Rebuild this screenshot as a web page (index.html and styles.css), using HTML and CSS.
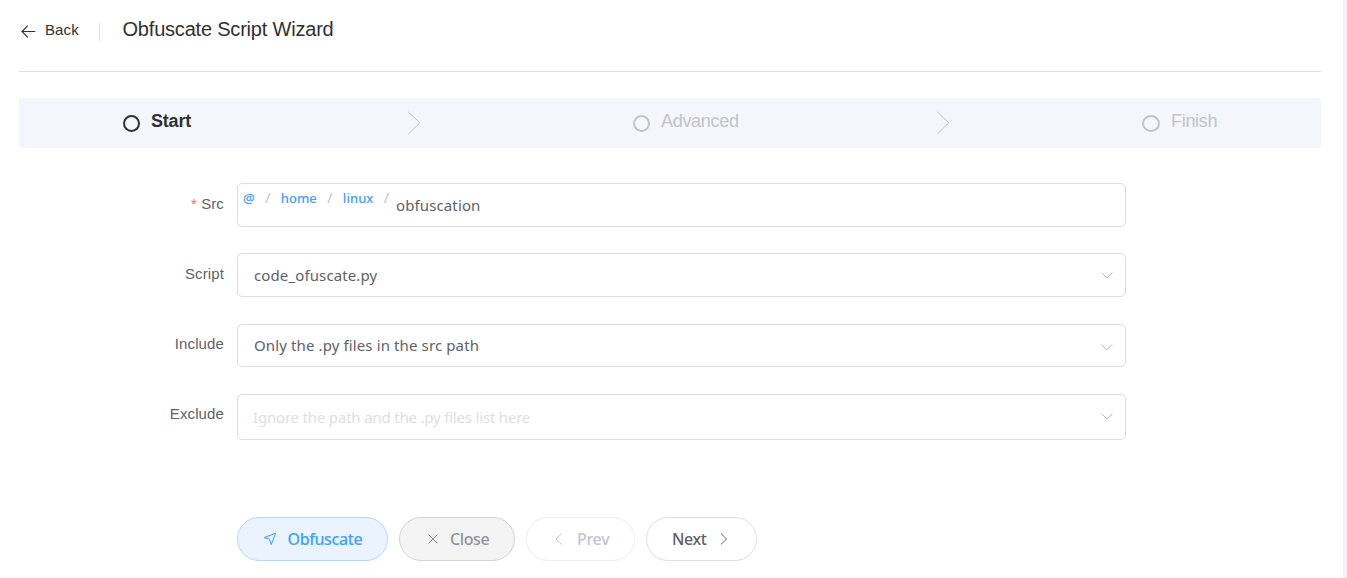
FILE: index.html
```html
<!DOCTYPE html>
<html lang="en">
<head>
<meta charset="utf-8">
<title>Obfuscate Script Wizard</title>
<link rel="stylesheet" href="styles.css">
</head>
<body>
<main class="page">
  <header class="header">
    <a class="back">
      <svg class="back-icon" width="16" height="14" viewBox="0 0 16 14"><path d="M14.3 7.5H1M6.8 1.7L1 7.5L6.8 13.3"/></svg>
      <span class="back-text">Back</span>
    </a>
    <h1 class="title">Obfuscate Script Wizard</h1>
  </header>
  <nav class="steps">
    <div class="step step-start"><i class="ring"></i><span class="step-text">Start</span></div>
    <svg class="step-arrow" width="14" height="24" viewBox="0 0 14 24"><path d="M1 .7L12.8 11.7L1.4 23"/></svg>
    <div class="step step-advanced"><i class="ring"></i><span class="step-text">Advanced</span></div>
    <svg class="step-arrow" width="14" height="24" viewBox="0 0 14 24"><path d="M1 .7L12.8 11.7L1.4 23"/></svg>
    <div class="step step-finish"><i class="ring"></i><span class="step-text">Finish</span></div>
  </nav>
  <form class="form">
    <div class="row row-src">
      <label class="label"><b class="required">*</b> Src</label>
      <div class="field field-src">
        <div class="crumbs"><span class="crumb">@</span><i class="slash">/</i><span class="crumb">home</span><i class="slash">/</i><span class="crumb">linux</span><i class="slash">/</i></div>
        <span class="value src-value">obfuscation</span>
      </div>
    </div>
    <div class="row row-script">
      <label class="label">Script</label>
      <div class="field"><span class="value script-value">code_ofuscate.py</span><svg class="caret" width="12" height="7" viewBox="0 0 12 7"><path d="M.6 .8L6 5.9L11.4 .8"/></svg></div>
    </div>
    <div class="row row-include">
      <label class="label">Include</label>
      <div class="field"><span class="value include-value">Only the .py files in the src path</span><svg class="caret" width="12" height="7" viewBox="0 0 12 7"><path d="M.4 .5L5.7 6L11 .5"/></svg></div>
    </div>
    <div class="row row-exclude">
      <label class="label">Exclude</label>
      <div class="field"><span class="value placeholder">Ignore the path and the .py files list here</span><svg class="caret" width="12" height="7" viewBox="0 0 12 7"><path d="M.6 .8L6 5.9L11.4 .8"/></svg></div>
    </div>
    <div class="actions">
      <button type="button" class="btn btn-obfuscate"><svg width="14" height="14" viewBox="0 0 14 14"><path d="M1.2 5.6L12.7 1.2L8.2 12.6L6.5 7.2Z"/></svg><span>Obfuscate</span></button>
      <button type="button" class="btn btn-close"><svg width="10" height="10" viewBox="0 0 10 10"><path d="M.5 .5L9.5 9.5M9.5 .5L.5 9.5"/></svg><span>Close</span></button>
      <button type="button" class="btn btn-prev"><svg width="8" height="12" viewBox="0 0 8 12"><path d="M6.6 .6L1 6L6.6 11.4"/></svg><span>Prev</span></button>
      <button type="button" class="btn btn-next"><span>Next</span><svg width="8" height="12" viewBox="0 0 8 12"><path d="M1 .6L6.6 6L1 11.4"/></svg></button>
    </div>
  </form>
</main>
</body>
</html>
```
FILE: styles.css
```css
* { box-sizing: border-box; }
body { margin: 0; background: #fff; font-family: "Liberation Sans", Arial, sans-serif; color: #303133; }
svg { display: block; flex: none; fill: none; stroke: currentColor; }
.page { height: 578px; overflow: hidden; padding: 0 22px 0 19px; border-right: 4px solid #f3f3f5; }
.header { display: flex; height: 72px; border-bottom: 1px solid #dcdfe6; padding-left: 2px; white-space: nowrap; }
.back { display: flex; height: 18px; margin-top: 23px; width: 79px; border-right: 1px solid #dcdfe6; }
.back-icon { margin: 1px 8px 0 0; stroke-width: 1.2; }
.back-text { font-size: 15px; line-height: 18px; margin-top: -2px; letter-spacing: .1px; }
.title { margin: 17px 0 0 22.5px; font-size: 20px; line-height: 24px; font-weight: 400; letter-spacing: -.2px; }
.steps { display: flex; height: 50px; margin-top: 26px; background: #f5f6fb; border-radius: 4px; color: #c0c4cc; white-space: nowrap; }
.step { display: flex; align-items: flex-start; }
.ring { width: 17px; height: 17px; margin-top: 17px; border: 2px solid currentColor; border-radius: 50%; }
.step-text { margin: 13px 0 0 11px; font-size: 18px; line-height: 20px; letter-spacing: -.3px; }
.step-start { width: 284px; margin-left: 104px; color: #303133; font-weight: 700; }
.step-start .step-text { letter-spacing: -.2px; }
.step-advanced { width: 303px; margin-left: 212px; }
.step-finish { margin-left: 192px; }
.step-finish .ring { width: 18px; }
.step-arrow { margin-top: 13px; stroke-width: 1; }
.form { padding-top: 35px; }
.row { display: flex; width: 1107px; }
.label { width: 205px; margin-right: 13px; padding-top: 11px; text-align: right; font-size: 15px; line-height: 20px; letter-spacing: .12px; color: #606266; white-space: nowrap; }
.required { color: #f56c6c; font-weight: 400; }
.field { display: flex; flex: 1; height: 44px; border: 1px solid #dcdde5; border-radius: 5px; padding: 0 12px 0 16px; align-items: center; justify-content: space-between; font-family: "Noto Sans", sans-serif; color: #606266; white-space: nowrap; }
.field-src { justify-content: flex-start; padding-left: 5px; align-items: flex-start; }
.crumbs { display: flex; flex: none; width: 153px; padding-top: 5px; font-size: 13px; line-height: 18px; font-weight: 500; color: #409eff; }
.crumb, .slash { flex: none; }
.crumb { letter-spacing: .05px; }
.slash { width: 26px; text-align: center; font-size: 14px; font-style: normal; font-weight: 400; color: #c0c4cc; }
.value { font-size: 15px; line-height: 20px; letter-spacing: .12px; }
.src-value { margin-top: 11px; }
.row-script { margin-top: 26px; }
.row-include { margin-top: 27px; }
.row-include .label, .row-exclude .label { padding-top: 10px; }
.row-include .field { height: 43px; }
.row-include .value { margin-bottom: 2px; }
.row-include .caret { margin-top: 3px; }
.row-exclude { margin-top: 27px; }
.row-exclude .field { height: 46px; }
.row-exclude .caret { margin-bottom: 2px; }
.placeholder { color: #dcdfe6; margin-left: -1px; letter-spacing: -.19px; }
.caret { color: #b4b8c0; }
.actions { display: flex; gap: 11px; margin: 77px 0 0 218px; }
.btn { display: flex; align-items: center; height: 44px; padding: 0 25px; border: 1px solid #dcdfe6; border-radius: 22px; background: #fff; font: 500 16px/22px "Noto Sans", sans-serif; color: #606266; white-space: nowrap; letter-spacing: -.4px; }
.btn-obfuscate { width: 151px; background: #eaf3ff; border-color: #b3d8ff; color: #409eff; }
.btn-obfuscate svg { margin-right: 10.5px; }
.btn-close { width: 116px; background: #f3f3f4; border-color: #d3d4d6; color: #909399; padding-left: 28px; }
.btn-close svg { margin-right: 12px; }
.btn-prev { width: 109px; border-color: #ebeef5; color: #c0c4cc; padding-left: 28px; letter-spacing: -.3px; }
.btn-prev svg { margin-right: 14px; }
.btn-next { width: 111px; }
.btn-next svg { margin-left: 13px; }
```
